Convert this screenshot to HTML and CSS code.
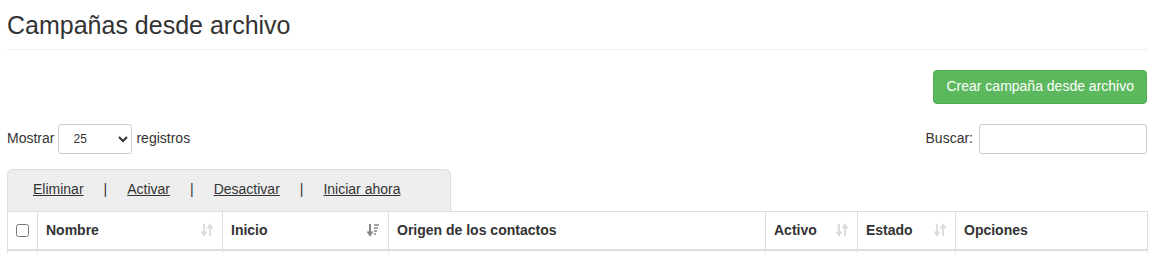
FILE: index.html
```html
<!DOCTYPE html>
<html lang="es">
<head>
  <meta charset="UTF-8">
  <title>Campañas desde archivo</title>
  <link rel="stylesheet" href="styles.css">
</head>
<body>
<div class="page">
  <h3 class="page-title">Campañas desde archivo</h3>

  <div class="toolbar">
    <button class="btn-success">Crear campaña desde archivo</button>
  </div>

  <div class="controls">
    <label class="length">Mostrar
      <select>
        <option>10</option>
        <option selected>25</option>
        <option>50</option>
        <option>100</option>
      </select>
      registros</label>
    <label class="search">Buscar: <input type="search"></label>
  </div>

  <div class="bulk-tabs">
    <a href="#">Eliminar</a><span>|</span>
    <a href="#">Activar</a><span>|</span>
    <a href="#">Desactivar</a><span>|</span>
    <a href="#">Iniciar ahora</a>
  </div>

  <table class="grid">
    <colgroup>
      <col style="width:30px">
      <col style="width:185px">
      <col style="width:166px">
      <col style="width:377px">
      <col style="width:92px">
      <col style="width:98px">
      <col style="width:192px">
    </colgroup>
    <thead>
      <tr>
        <th class="check"><input type="checkbox"></th>
        <th><div class="th-in">Nombre <svg class="sort" viewBox="0 0 12 14"><path d="M3 1v10M0.5 8.5 3 12 5.5 8.5M9 13V3M6.5 5.5 9 2 11.5 5.5" fill="none" stroke="#ddd" stroke-width="2"/></svg></div></th>
        <th><div class="th-in">Inicio <svg class="sort" viewBox="0 0 12 14"><path d="M3 1v10M0.5 8.5 3 12 5.5 8.5" fill="none" stroke="#888" stroke-width="2"/><path d="M7 2h5M7 5h4M7 8h3M7 11h2" stroke="#888" stroke-width="1.6"/></svg></div></th>
        <th>Origen de los contactos</th>
        <th><div class="th-in">Activo <svg class="sort" viewBox="0 0 12 14"><path d="M3 1v10M0.5 8.5 3 12 5.5 8.5M9 13V3M6.5 5.5 9 2 11.5 5.5" fill="none" stroke="#ddd" stroke-width="2"/></svg></div></th>
        <th><div class="th-in">Estado <svg class="sort" viewBox="0 0 12 14"><path d="M3 1v10M0.5 8.5 3 12 5.5 8.5M9 13V3M6.5 5.5 9 2 11.5 5.5" fill="none" stroke="#ddd" stroke-width="2"/></svg></div></th>
        <th>Opciones</th>
      </tr>
    </thead>
    <tbody>
      <tr><td></td><td></td><td></td><td></td><td></td><td></td><td></td></tr>
    </tbody>
  </table>
</div>
</body>
</html>
```

FILE: styles.css
```css
* { box-sizing: border-box; }
body { margin: 0; font-family: "Liberation Sans", Arial, sans-serif; font-size: 14px; line-height: 1.42857; color: #333; background: #fff; }
.page { padding: 0 7px; }

.page-title { font-size: 25px; font-weight: 400; line-height: 1.1; margin: 12px 0 0; padding-bottom: 9px; border-bottom: 1px solid #eee; }

.toolbar { display: flex; justify-content: flex-end; margin-top: 20px; }
.btn-success { background: #5cb85c; border: 1px solid #4cae4c; color: #fff; font: inherit; padding: 6px 12px; border-radius: 4px; height: 34px; cursor: pointer; }

.controls { display: flex; justify-content: space-between; align-items: center; margin-top: 20px; height: 30px; }
.controls label { display: flex; align-items: center; gap: 5px; }
.length { gap: 4px !important; }
.length select { width: 74px; height: 30px; font: 12px "Liberation Sans", Arial, sans-serif; color: #333; padding: 0 6px 0 10px; border: 1px solid #ccc; border-radius: 3px; background: #fff; }
.search input { width: 168px; height: 30px; border: 1px solid #ccc; border-radius: 3px; margin-left: 1px; }

.bulk-tabs { margin-top: 15px; width: 444px; height: 42px; background: #eee; border: 1px solid #ddd; border-bottom: none; border-radius: 6px 6px 0 0; display: flex; align-items: center; gap: 20px; padding: 0 0 1px 25px; }
.bulk-tabs a { color: #333; text-decoration: underline; }

.grid { width: 1140px; border-collapse: collapse; table-layout: fixed; border: 1px solid #ddd; }
.grid th { text-align: left; font-weight: 700; padding: 9px 8px; border: 1px solid #ddd; border-bottom: 2px solid #ddd; white-space: nowrap; }
.grid th.check { padding: 9px 0; text-align: center; }
.grid th.check input { margin: 0; width: 13px; height: 13px; vertical-align: middle; }
.grid td { height: 37px; border: 1px solid #ddd; }
.th-in { display: flex; justify-content: space-between; align-items: center; }
.sort { width: 12px; height: 14px; margin-right: 1px; }
```
